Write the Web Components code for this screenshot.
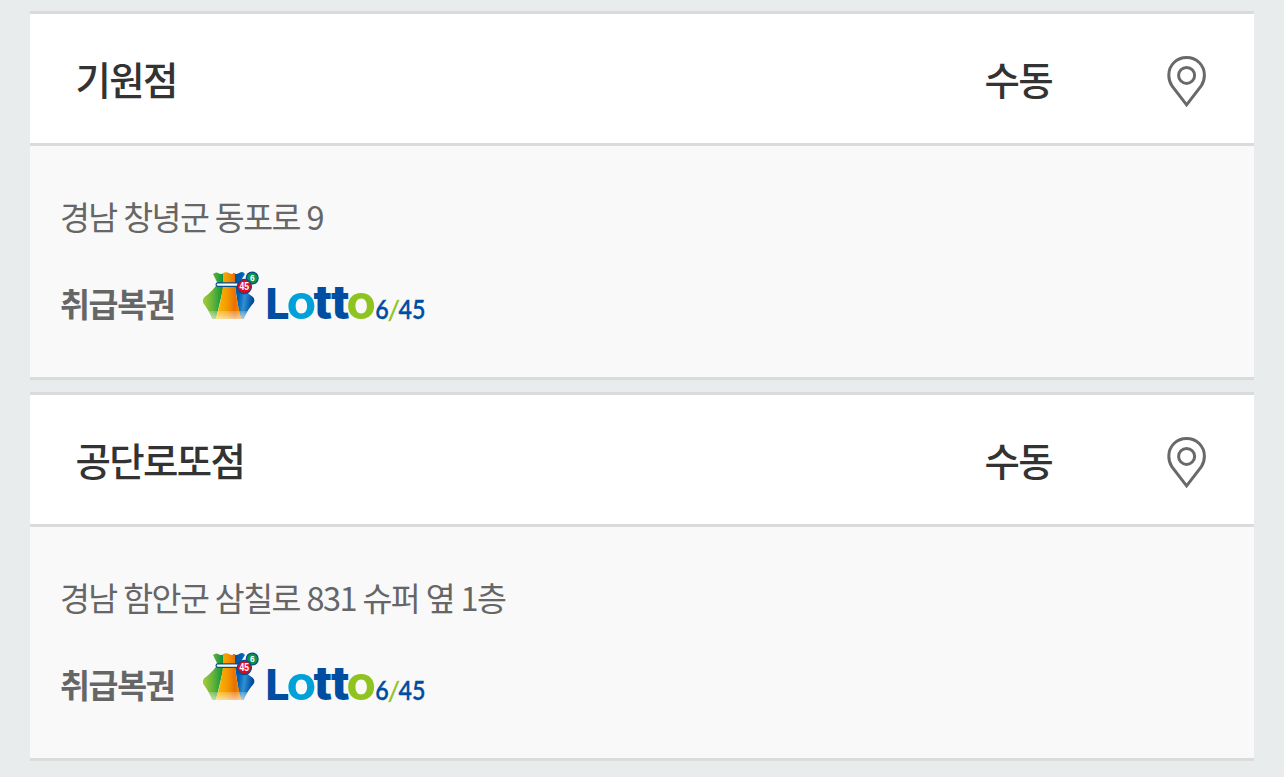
<!DOCTYPE html>
<html lang="ko">
<head>
<meta charset="UTF-8">
<title>판매점</title>
<style>
  body {
    margin: 0;
    background: #e8eced;
    font-family: "Noto Sans CJK KR", "Noto Sans", sans-serif;
    color: #333;
    overflow: hidden;
  }
</style>
</head>
<body>
<store-list>
  <store-card name="기원점" method="수동">경남 창녕군 동포로 9</store-card>
  <store-card name="공단로또점" method="수동">경남 함안군 삼칠로 831 슈퍼 옆 1층</store-card>
</store-list>

<script>
class MapPin extends HTMLElement {
  constructor() {
    super();
    this.attachShadow({ mode: 'open' });
  }

  connectedCallback() {
    this.shadowRoot.innerHTML = `
      <style>
        :host { display: block; width: 40px; height: 52px; }
        svg { display: block; }
      </style>
      <svg width="40" height="52" viewBox="0 0 40 52" fill="none" stroke="#696969" stroke-width="3">
        <path d="M19.6 49.8 L5 31 C2.8 27.6 1.8 24.2 1.8 20.2 C1.8 10 9.8 2.5 19.6 2.5 S37.4 10 37.4 20.2 C37.4 24.2 36.4 27.6 34.2 31 Z"/>
        <circle cx="19.6" cy="20.4" r="8"/>
      </svg>
    `;
  }
}

class LottoLogo extends HTMLElement {
  constructor() {
    super();
    this.attachShadow({ mode: 'open' });
  }

  connectedCallback() {
    this.shadowRoot.innerHTML = `
      <style>
        :host { display: block; width: 232px; height: 76px; }
        svg { display: block; letter-spacing: 0; word-spacing: 0; overflow: visible; }
        .word { font-family: Inter, sans-serif; font-weight: 800; }
        .num { font-family: Lato, sans-serif; font-weight: 600; font-size: 27px; }
        .ball { font-family: "Liberation Sans", sans-serif; font-weight: 700; fill: #fff; }
      </style>
      <svg width="232" height="76" viewBox="200 262 232 76">
        <defs>
          <linearGradient id="green" x1="0" y1="0" x2="1" y2="0">
            <stop offset="0" stop-color="#a8cb38"/>
            <stop offset=".5" stop-color="#62b33a"/>
            <stop offset="1" stop-color="#00913f"/>
          </linearGradient>
          <linearGradient id="orange" x1="0" y1="0" x2="1" y2="0">
            <stop offset="0" stop-color="#ffc000"/>
            <stop offset=".45" stop-color="#f39a00"/>
            <stop offset=".75" stop-color="#e86f00"/>
            <stop offset="1" stop-color="#f39800"/>
          </linearGradient>
          <linearGradient id="blue" x1="0" y1="0" x2="1" y2=".3">
            <stop offset="0" stop-color="#004a9e"/>
            <stop offset=".4" stop-color="#0061b5"/>
            <stop offset=".65" stop-color="#2d91d2"/>
            <stop offset="1" stop-color="#004b9c"/>
          </linearGradient>
          <linearGradient id="shine" x1="0" y1="0" x2="0" y2="1">
            <stop offset="0" stop-color="#fff" stop-opacity=".2"/>
            <stop offset="1" stop-color="#fff" stop-opacity=".6"/>
          </linearGradient>
        </defs>
        <path fill="url(#green)" d="M213 274 Q216 271.5 218 273 Q221 275 224 273 L224 285 L216 319 L212.5 319 Q208 309 203.2 303 Q202 300 204 297.5 Q214 290 217.5 283 Z"/>
        <path fill="url(#blue)" d="M233 273 Q237 275 240 272.5 Q243 271 245 274 L239.5 283 Q244 291 253 297 Q255.5 300 253.5 303 Q248 309 243.5 319 L240 319 Z"/>
        <path fill="url(#orange)" d="M223 273 Q226 271.5 229 273 Q232 275 235 273 L235 285 Q237 304 241.5 319 L215.5 319 Q221 304 223 285 Z"/>
        <path fill="url(#shine)" d="M208.5 311 L248 311 L243.5 319 L212.5 319 Z"/>
        <path d="M217.8 284.6 H239" stroke="#005094" stroke-width="4.6" stroke-linecap="round"/>
        <path d="M217.8 284.6 H239" stroke="#fff" stroke-width="2.2" stroke-linecap="round"/>
        <circle cx="252.2" cy="278" r="5.9" fill="#0b9448" stroke="#004d91" stroke-width="1.3"/>
        <circle cx="244.4" cy="286.5" r="7.1" fill="#df0a21" stroke="#004d91" stroke-width="1.2"/>
        <text class="ball" x="249.9" y="281" font-size="8.5">6</text>
        <text class="ball" x="239.5" y="290.2" font-size="10" textLength="9.6" lengthAdjust="spacingAndGlyphs">45</text>
        <g class="word">
          <text x="265.6" y="318.8" font-size="43" textLength="24" lengthAdjust="spacingAndGlyphs" fill="#004ea2">L</text>
          <text x="286.6" y="318.8" font-size="47.5" textLength="29.8" lengthAdjust="spacingAndGlyphs" fill="#00a0d8" font-weight="700">o</text>
          <text x="313.4" y="318.8" font-size="47" textLength="18.6" lengthAdjust="spacingAndGlyphs" fill="#004ea2">t</text>
          <text x="331" y="318.8" font-size="47" textLength="18.6" lengthAdjust="spacingAndGlyphs" fill="#004ea2">t</text>
          <text x="346.2" y="318.8" font-size="47.5" textLength="29.8" lengthAdjust="spacingAndGlyphs" fill="#8fc31f" font-weight="700">o</text>
        </g>
        <text class="num" x="375.2" y="318.7" textLength="50.4" lengthAdjust="spacingAndGlyphs" fill="#004ea2" stroke="#004ea2" stroke-width=".3">6<tspan fill="#8fc31f" stroke="#8fc31f" font-style="italic">/</tspan>45</text>
      </svg>
    `;
  }
}

class StoreCard extends HTMLElement {
  constructor() {
    super();
    this.attachShadow({ mode: 'open' });
  }

  connectedCallback() {
    this.render();
  }

  render() {
    this.shadowRoot.innerHTML = `
      <style>
        :host {
          display: block;
          border-top: 3px solid #dbdbdb;
          border-bottom: 3px solid #dbdbdb;
          background: #f9f9f9;
        }
        header {
          display: flex;
          align-items: center;
          box-sizing: border-box;
          height: 132px;
          padding: 0 47px 0 45.5px;
          background: #fff;
          border-bottom: 3px solid #dbdbdb;
          font-size: 38.5px;
          font-weight: 500;
          line-height: 58px;
          letter-spacing: -1.7px;
        }
        .name { flex: 1; }
        .method { margin-right: 115px; }
        map-pin { margin-top: 5px; }
        .name, .method { margin-bottom: 1px; }
        .detail {
          box-sizing: border-box;
          height: 231px;
          padding: 45px 30px 0;
          font-size: 32.5px;
          line-height: 50px;
          letter-spacing: -1.55px;
          word-spacing: -1px;
          color: #666;
        }
        .games {
          display: flex;
          align-items: flex-start;
          margin-top: 21px;
        }
        .label {
          font-weight: 700;
          letter-spacing: -1.3px;
          margin-top: 16px;
          width: 140px;
        }
      </style>
      <header>
        <div class="name">${this.getAttribute('name')}</div>
        <div class="method">${this.getAttribute('method')}</div>
        <map-pin></map-pin>
      </header>
      <div class="detail">
        <div><slot></slot></div>
        <div class="games">
          <div class="label">취급복권</div>
          <lotto-logo></lotto-logo>
        </div>
      </div>
    `;
  }
}

class StoreList extends HTMLElement {
  constructor() {
    super();
    this.attachShadow({ mode: 'open' });
    this.shadowRoot.innerHTML = `
      <style>
        :host {
          display: flex;
          flex-direction: column;
          gap: 12px;
          padding: 11px 30px 16px;
        }
      </style>
      <slot></slot>
    `;
  }
}

customElements.define('map-pin', MapPin);
customElements.define('lotto-logo', LottoLogo);
customElements.define('store-card', StoreCard);
customElements.define('store-list', StoreList);
</script>
</body>
</html>
